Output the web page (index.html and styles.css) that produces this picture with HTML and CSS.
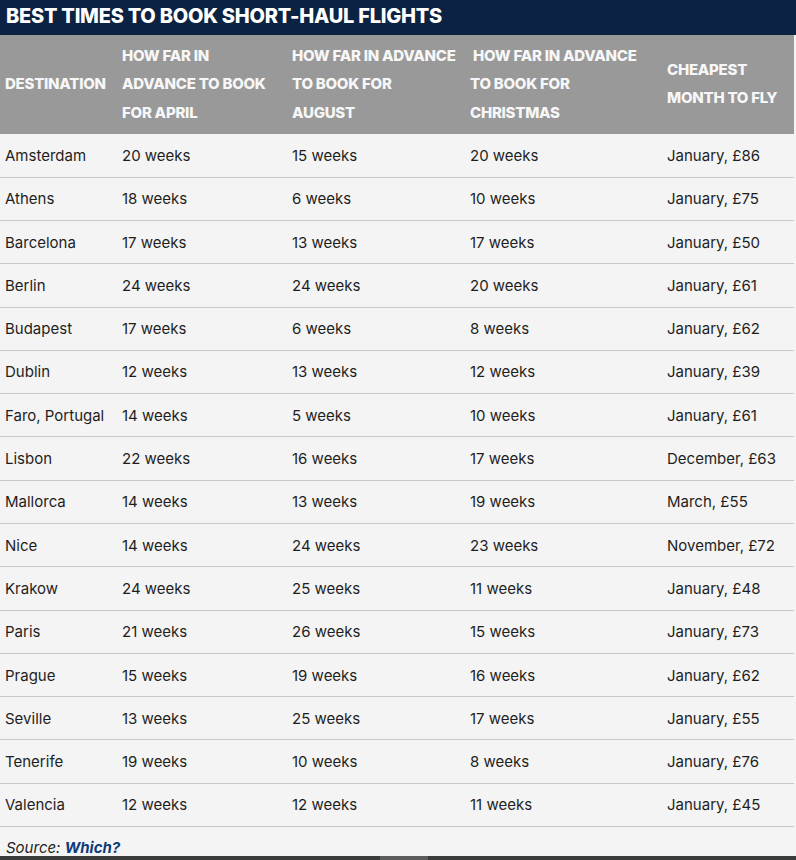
FILE: index.html
```html
<!DOCTYPE html>
<html>
<head>
<meta charset="utf-8">
<link rel="stylesheet" href="styles.css">
</head>
<body>
<div class="page">
  <h2 class="title">BEST TIMES TO BOOK SHORT-HAUL FLIGHTS</h2>
  <table class="flights">
    <colgroup>
      <col class="c1"><col class="c2"><col class="c3"><col class="c4"><col class="c5">
    </colgroup>
    <thead>
      <tr>
        <th>DESTINATION</th>
        <th>HOW FAR IN<br>ADVANCE TO BOOK<br>FOR APRIL</th>
        <th>HOW FAR IN ADVANCE<br>TO BOOK FOR<br>AUGUST</th>
        <th><span class="lead">HOW FAR IN ADVANCE</span><br>TO BOOK FOR<br>CHRISTMAS</th>
        <th>CHEAPEST<br>MONTH TO FLY</th>
      </tr>
    </thead>
    <tbody>
      <tr><td>Amsterdam</td><td>20 weeks</td><td>15 weeks</td><td>20 weeks</td><td>January, £86</td></tr>
      <tr><td>Athens</td><td>18 weeks</td><td>6 weeks</td><td>10 weeks</td><td>January, £75</td></tr>
      <tr><td>Barcelona</td><td>17 weeks</td><td>13 weeks</td><td>17 weeks</td><td>January, £50</td></tr>
      <tr><td>Berlin</td><td>24 weeks</td><td>24 weeks</td><td>20 weeks</td><td>January, £61</td></tr>
      <tr><td>Budapest</td><td>17 weeks</td><td>6 weeks</td><td>8 weeks</td><td>January, £62</td></tr>
      <tr><td>Dublin</td><td>12 weeks</td><td>13 weeks</td><td>12 weeks</td><td>January, £39</td></tr>
      <tr><td>Faro, Portugal</td><td>14 weeks</td><td>5 weeks</td><td>10 weeks</td><td>January, £61</td></tr>
      <tr><td>Lisbon</td><td>22 weeks</td><td>16 weeks</td><td>17 weeks</td><td>December, £63</td></tr>
      <tr><td>Mallorca</td><td>14 weeks</td><td>13 weeks</td><td>19 weeks</td><td>March, £55</td></tr>
      <tr><td>Nice</td><td>14 weeks</td><td>24 weeks</td><td>23 weeks</td><td>November, £72</td></tr>
      <tr><td>Krakow</td><td>24 weeks</td><td>25 weeks</td><td>11 weeks</td><td>January, £48</td></tr>
      <tr><td>Paris</td><td>21 weeks</td><td>26 weeks</td><td>15 weeks</td><td>January, £73</td></tr>
      <tr><td>Prague</td><td>15 weeks</td><td>19 weeks</td><td>16 weeks</td><td>January, £62</td></tr>
      <tr><td>Seville</td><td>13 weeks</td><td>25 weeks</td><td>17 weeks</td><td>January, £55</td></tr>
      <tr><td>Tenerife</td><td>19 weeks</td><td>10 weeks</td><td>8 weeks</td><td>January, £76</td></tr>
      <tr><td>Valencia</td><td>12 weeks</td><td>12 weeks</td><td>11 weeks</td><td>January, £45</td></tr>
    </tbody>
  </table>
  <p class="source">Source: <a class="src-link">Which?</a></p>
  <div class="scrollbar"><div class="thumb"></div></div>
</div>
</body>
</html>
```

FILE: styles.css
```css
html, body {
  margin: 0;
  padding: 0;
  background: #f4f4f5;
}
.page {
  width: 796px;
  height: 860px;
  display: flex;
  flex-direction: column;
  font-family: Inter, "Liberation Sans", sans-serif;
  color: #1e1e1e;
  overflow: hidden;
}
.title {
  margin: 0;
  height: 36px;
  line-height: 32px;
  padding: 0 6px;
  background: #0b2242;
  color: #ffffff;
  font-size: 20px;
  font-weight: 800;
  letter-spacing: -0.25px;
  box-sizing: border-box;
}
.flights {
  width: 794px;
  border-collapse: collapse;
  table-layout: fixed;
  background: #f4f4f4;
}
.c1 { width: 117px; }
.c2 { width: 170px; }
.c3 { width: 178px; }
.c4 { width: 197px; }
.c5 { width: 132px; }
.flights thead tr {
  background: #999999;
}
.flights th {
  text-align: left;
  vertical-align: middle;
  color: #f7f7f7;
  font-size: 15px;
  font-weight: 800;
  letter-spacing: -0.25px;
  line-height: 28.5px;
  padding: 6px 0 7px 5px;
  height: 86px;
  white-space: nowrap;
}
.flights th .lead { padding-left: 3px; }
.flights td {
  font-size: 15px;
  font-weight: 400;
  height: 42.3px;
  padding: 0 0 0 5px;
  border-bottom: 1px solid #c8c8c8;
  white-space: nowrap;
  vertical-align: middle;
}
.source {
  margin: 0;
  padding: 13px 0 0 6px;
  font-size: 15px;
  font-style: italic;
  color: #222;
  line-height: 16px;
}
.src-link {
  color: #0d3b78;
  font-weight: 700;
}
.scrollbar {
  margin-top: auto;
  height: 4px;
  background: #3a3c3c;
  position: relative;
}
.thumb {
  position: absolute;
  left: 380px;
  top: 0;
  width: 48px;
  height: 4px;
  background: #5c5c5c;
}
```
